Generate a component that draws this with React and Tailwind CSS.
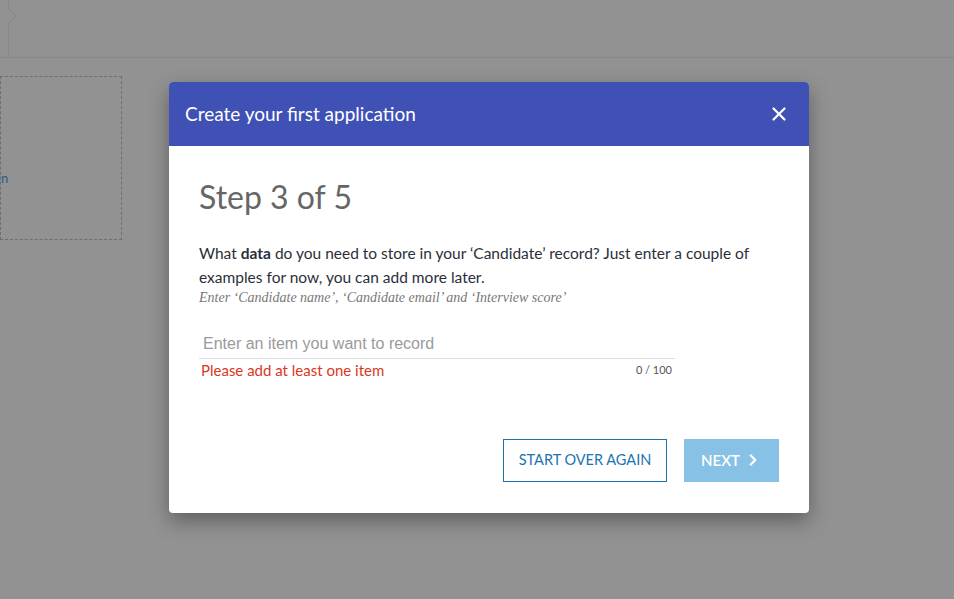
import { X, ChevronRight } from "lucide-react";

export default function App() {
  return (
    <div className="relative h-[599px] w-[954px] overflow-hidden bg-[#929292]" style={{ fontFamily: "Lato, 'Noto Sans', sans-serif" }}>
      {/* dimmed page behind the dialog */}
      <div className="flex h-[58px] border-b border-[#878787]">
        <div className="relative w-[9px] border-r border-[#878787]">
          <div className="absolute left-[5px] top-[11px] h-[10px] w-[10px] rotate-45 border-r border-t border-[#878787] bg-[#929292]" />
        </div>
      </div>
      <div className="mt-[18px] flex h-[164px] w-[122px] items-center border border-dashed border-[#6e6e6e]">
        <span className="mt-[40px] text-[13px] leading-none text-[#2d5c86]">n</span>
      </div>

      <div className="absolute left-[169px] top-[82px] w-[640px] overflow-hidden rounded-[4px] bg-white shadow-[0_8px_20px_rgba(0,0,0,0.35)]">
        <div className="flex h-[64px] items-center justify-between bg-[#3f51b5] pl-4 pr-[19px]">
          <h2 className="text-[19px] text-white">Create your first application</h2>
          <X size={22} strokeWidth={2.5} className="text-white" aria-hidden="true" />
        </div>

        <div className="px-[30px] pb-[31px] pt-[31px]">
          <h3 className="text-[32px] leading-[40px] text-[#666]">Step 3 of 5</h3>

          <p className="mt-[24px] text-[15.5px] leading-[24px] text-[#2b2f3a]">
            What <b>data</b> do you need to store in your ‘Candidate’ record? Just enter a couple of examples for now, you can add more later.
          </p>
          <p className="text-[14px] italic leading-[18px] text-[#777]" style={{ fontFamily: "'Liberation Serif', serif" }}>
            Enter ‘Candidate name’, ‘Candidate email’ and ‘Interview score’
          </p>

          <div className="mt-[25px] w-[476px]">
            <div className="border-b border-[#ddd] px-[4px] pb-[2px] text-[16px] text-[#9a9a9a]" style={{ fontFamily: "'Liberation Sans', sans-serif" }}>
              Enter an item you want to record
            </div>
            <div className="flex items-center justify-between pl-[2px] pr-[3px]">
              <span className="text-[15px] text-[#d9381e]">Please add at least one item</span>
              <span className="text-[11px] text-[#555]">0 / 100</span>
            </div>
          </div>

          <div className="mt-[57px] flex justify-end gap-[17px]">
            <button className="h-[43px] w-[164px] border border-[#1b74ae] text-[14.5px] text-[#1b74ae]">START OVER AGAIN</button>
            <button className="flex h-[43px] w-[95px] items-center justify-center gap-1 bg-[#87c1e6] text-[15px] font-semibold text-white">
              NEXT <ChevronRight size={18} strokeWidth={3} aria-hidden="true" />
            </button>
          </div>
        </div>
      </div>
    </div>
  );
}
